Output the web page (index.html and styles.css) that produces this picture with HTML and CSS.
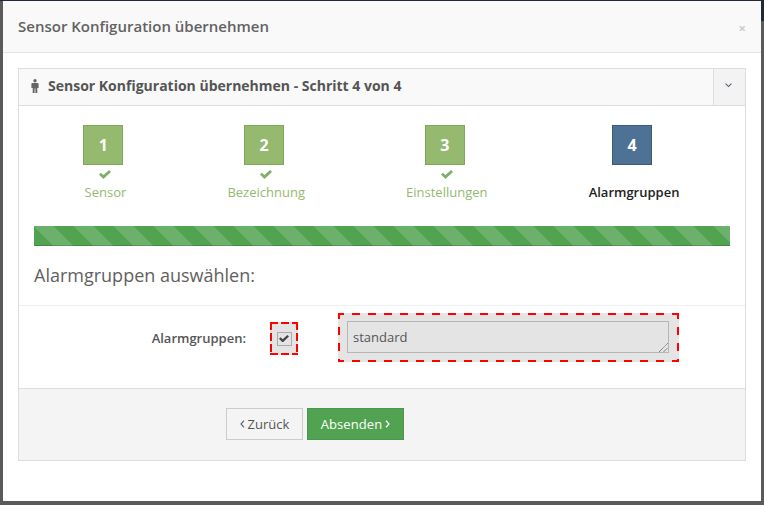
FILE: index.html
```html
<!DOCTYPE html>
<html lang="de">
<head>
<meta charset="utf-8">
<title>Sensor Konfiguration übernehmen</title>
<link rel="stylesheet" href="styles.css">
</head>
<body>
<div class="modal">
  <header class="modal-head">
    <h1 class="modal-title">Sensor Konfiguration übernehmen</h1>
    <span class="close">×</span>
  </header>
  <div class="modal-body">
    <section class="panel">
      <div class="panel-head">
        <div class="panel-title">
          <svg class="person" viewBox="0 0 8 14" width="8" height="14"><circle cx="4" cy="1.8" r="1.7"/><path d="M.4 5Q.4 4 1.4 4H6.6Q7.6 4 7.6 5V9H6.3V14H4.4V9.6H3.6V14H1.7V9H.4Z"/></svg>
          <span>Sensor Konfiguration übernehmen - Schritt 4 von 4</span>
        </div>
        <div class="toggle"><svg viewBox="0 0 8 5" width="7" height="4.4"><path d="M.7.8 4 4 7.3.8" fill="none" stroke="#4a5f78" stroke-width="1.2"/></svg></div>
      </div>
      <div class="wizard">
        <ol class="steps">
          <li class="step done"><span class="num">1</span><svg class="check" viewBox="0 0 12 9" width="12" height="9"><path d="M0 4.6 1.9 2.7 4.4 5.1 10.1 0 12 1.9 4.4 9Z"/></svg><span class="label">Sensor</span></li>
          <li class="step done"><span class="num">2</span><svg class="check" viewBox="0 0 12 9" width="12" height="9"><path d="M0 4.6 1.9 2.7 4.4 5.1 10.1 0 12 1.9 4.4 9Z"/></svg><span class="label">Bezeichnung</span></li>
          <li class="step done"><span class="num">3</span><svg class="check" viewBox="0 0 12 9" width="12" height="9"><path d="M0 4.6 1.9 2.7 4.4 5.1 10.1 0 12 1.9 4.4 9Z"/></svg><span class="label">Einstellungen</span></li>
          <li class="step active"><span class="num">4</span><span class="check-space"></span><span class="label">Alarmgruppen</span></li>
        </ol>
        <div class="progress"></div>
        <h2 class="section-title">Alarmgruppen auswählen:</h2>
      </div>
      <div class="form-row">
        <label class="form-label">Alarmgruppen:</label>
        <div class="dashed check-wrap"><span class="checkbox"><svg viewBox="0 0 12 9" width="10" height="7.5"><path d="M0 4.6 1.9 2.7 4.4 5.1 10.1 0 12 1.9 4.4 9Z" fill="#444"/></svg></span></div>
        <div class="dashed area-wrap"><div class="textarea">standard<svg class="grip" viewBox="0 0 9 9" width="9" height="9"><path d="M0 9 9 0M4.5 9 9 4.5" stroke="#555" stroke-width="1" stroke-dasharray="1 .6"/></svg></div></div>
      </div>
      <footer class="panel-foot">
        <button class="btn btn-back"><svg class="chev" viewBox="0 0 5 8" width="5" height="8"><path d="M4 .7 1 4l3 3.3" fill="none" stroke="#5a6a7c" stroke-width="1.2"/></svg>Zurück</button>
        <button class="btn btn-send">Absenden<svg class="chev" viewBox="0 0 5 8" width="5" height="8"><path d="M1 .7 4 4 1 7.3" fill="none" stroke="#fff" stroke-width="1.3"/></svg></button>
      </footer>
    </section>
  </div>
</div>
</body>
</html>
```
FILE: styles.css
```css
* { box-sizing: border-box; }
html, body { height: 100%; }
body {
  margin: 0;
  padding: 1px 3px 4px;
  background:
    linear-gradient(#1f2a36, #1f2a36) top right / 3px 21px no-repeat,
    linear-gradient(#1f2a36 0, #1f2a36 1px, #5a5a5a 1px);
  font-family: "Open Sans", "Liberation Sans", sans-serif;
  overflow: hidden;
}
.modal { height: 500px; background: #fff; display: flex; flex-direction: column; }
.modal-head {
  height: 52px;
  background: #f9f9f9;
  border-bottom: 1px solid #e5e5e5;
  display: flex;
  align-items: center;
  justify-content: space-between;
  padding: 0 15px;
}
.modal-title { margin: 0 0 1px; font-size: 15px; font-weight: 600; color: #626262; line-height: 20px; }
.close { color: #ccc; font-size: 13px; font-weight: 700; line-height: 1; padding-top: 4px; }
.modal-body { padding: 15px 15px 0; }
.panel { height: 393px; border: 1px solid #ddd; display: flex; flex-direction: column; }
.panel-head {
  height: 37px;
  background: #f9f9f9;
  border-bottom: 1px solid #ddd;
  display: flex;
  justify-content: space-between;
  flex: none;
}
.panel-title { display: flex; align-items: center; gap: 9px; padding: 0 0 3px 12px; font-size: 14px; font-weight: 700; color: #555; }
.person { fill: #666; }
.toggle { width: 32px; background: #f3f3f3; border-left: 1px solid #ddd; padding: 0 3px 3px 0; display: flex; align-items: center; justify-content: center; }
.wizard { padding: 19px 15px 0; height: 200px; flex: none; border-bottom: 1px solid #eee; }
.steps { list-style: none; margin: 0; padding: 0; display: flex; justify-content: space-around; }
.step { display: flex; flex-direction: column; align-items: center; }
.num {
  width: 40px;
  height: 40px;
  margin-left: -4px;
  padding-bottom: 1px;
  display: flex;
  align-items: center;
  justify-content: center;
  color: #fff;
  font-size: 16px;
  font-weight: 700;
}
.done .num { background: #95b96f; border: 1px solid #7fa957; }
.active .num { background: #4e7296; border: 1px solid #3d5a78; }
.check { display: block; margin-top: 5px; fill: #7fb06a; }
.check-space { display: block; height: 14px; }
.label { font-size: 13px; line-height: 18px; margin-top: 4px; color: #95b96f; }
.active .label { color: #222; font-weight: 600; }
.progress {
  height: 20px;
  margin-top: 25px;
  background-color: #51a351;
  background-image: linear-gradient(45deg, rgba(255,255,255,.15) 25%, transparent 25%, transparent 50%, rgba(255,255,255,.15) 50%, rgba(255,255,255,.15) 75%, transparent 75%);
  background-size: 40px 40px;
  box-shadow: inset 0 -1px 0 rgba(0,0,0,.15);
}
.section-title { margin: 17px 0 0; font-size: 18px; font-weight: 400; line-height: 24px; color: #5f5f5f; }
.form-row { height: 82px; flex: none; display: flex; align-items: center; padding-bottom: 19px; }
.form-label { width: 227px; margin-top: 1px; text-align: right; font-size: 13px; font-weight: 600; color: #555; }
.dashed {
  background-color: #e4e4e4;
  background-image:
    linear-gradient(90deg, #f00 50%, transparent 50%),
    linear-gradient(90deg, #f00 50%, transparent 50%),
    linear-gradient(180deg, #f00 50%, transparent 50%),
    linear-gradient(180deg, #f00 50%, transparent 50%);
  background-repeat: repeat-x, repeat-x, repeat-y, repeat-y;
}
.check-wrap {
  width: 28px;
  height: 33px;
  margin: 2px 0 0 24px;
  display: flex;
  align-items: center;
  justify-content: center;
  background-image:
    linear-gradient(90deg, #f00 8px, transparent 8px),
    linear-gradient(90deg, #f00 8px, transparent 8px),
    linear-gradient(180deg, #f00 8px, transparent 8px),
    linear-gradient(180deg, #f00 8px, transparent 8px);
  background-size: 11px 2px, 11px 2px, 2px 11px, 2px 11px;
  background-position: 0 0, 0 100%, 0 0, 100% 0;
}
.checkbox { width: 15px; height: 14px; border: 1px solid #aaa; background: #e4e4e4; display: flex; align-items: center; justify-content: center; }
.area-wrap {
  width: 341px;
  height: 49px;
  margin-left: 40px;
  padding: 8px 10px 9px 9px;
  background-size: 16px 2px, 16px 2px, 2px 16px, 2px 16px;
  background-position: -2px 0, -2px 100%, 0 -2px, 100% -2px;
}
.textarea {
  position: relative;
  height: 32px;
  border: 1px solid #b5b5b5;
  background: #e4e4e4;
  padding: 0 5px;
  font-size: 13px;
  line-height: 30px;
  color: #555;
}
.grip { position: absolute; right: 0; bottom: 0; }
.panel-foot {
  flex: 1;
  background: #f4f4f4;
  border-top: 1px solid #ddd;
  padding: 19px 0 0 207px;
  display: flex;
  align-items: flex-start;
  gap: 4px;
}
.btn { height: 32px; font-family: inherit; font-size: 13px; padding: 0; display: flex; align-items: center; justify-content: center; }
.btn-back { width: 77px; gap: 3px; background: #f4f4f4; border: 1px solid #ccc; color: #555; }
.btn-send { width: 97px; gap: 3px; background: #51a351; border: 1px solid #4a964a; color: #fff; font-weight: 500; letter-spacing: .1px; }
.chev { display: block; }
```
